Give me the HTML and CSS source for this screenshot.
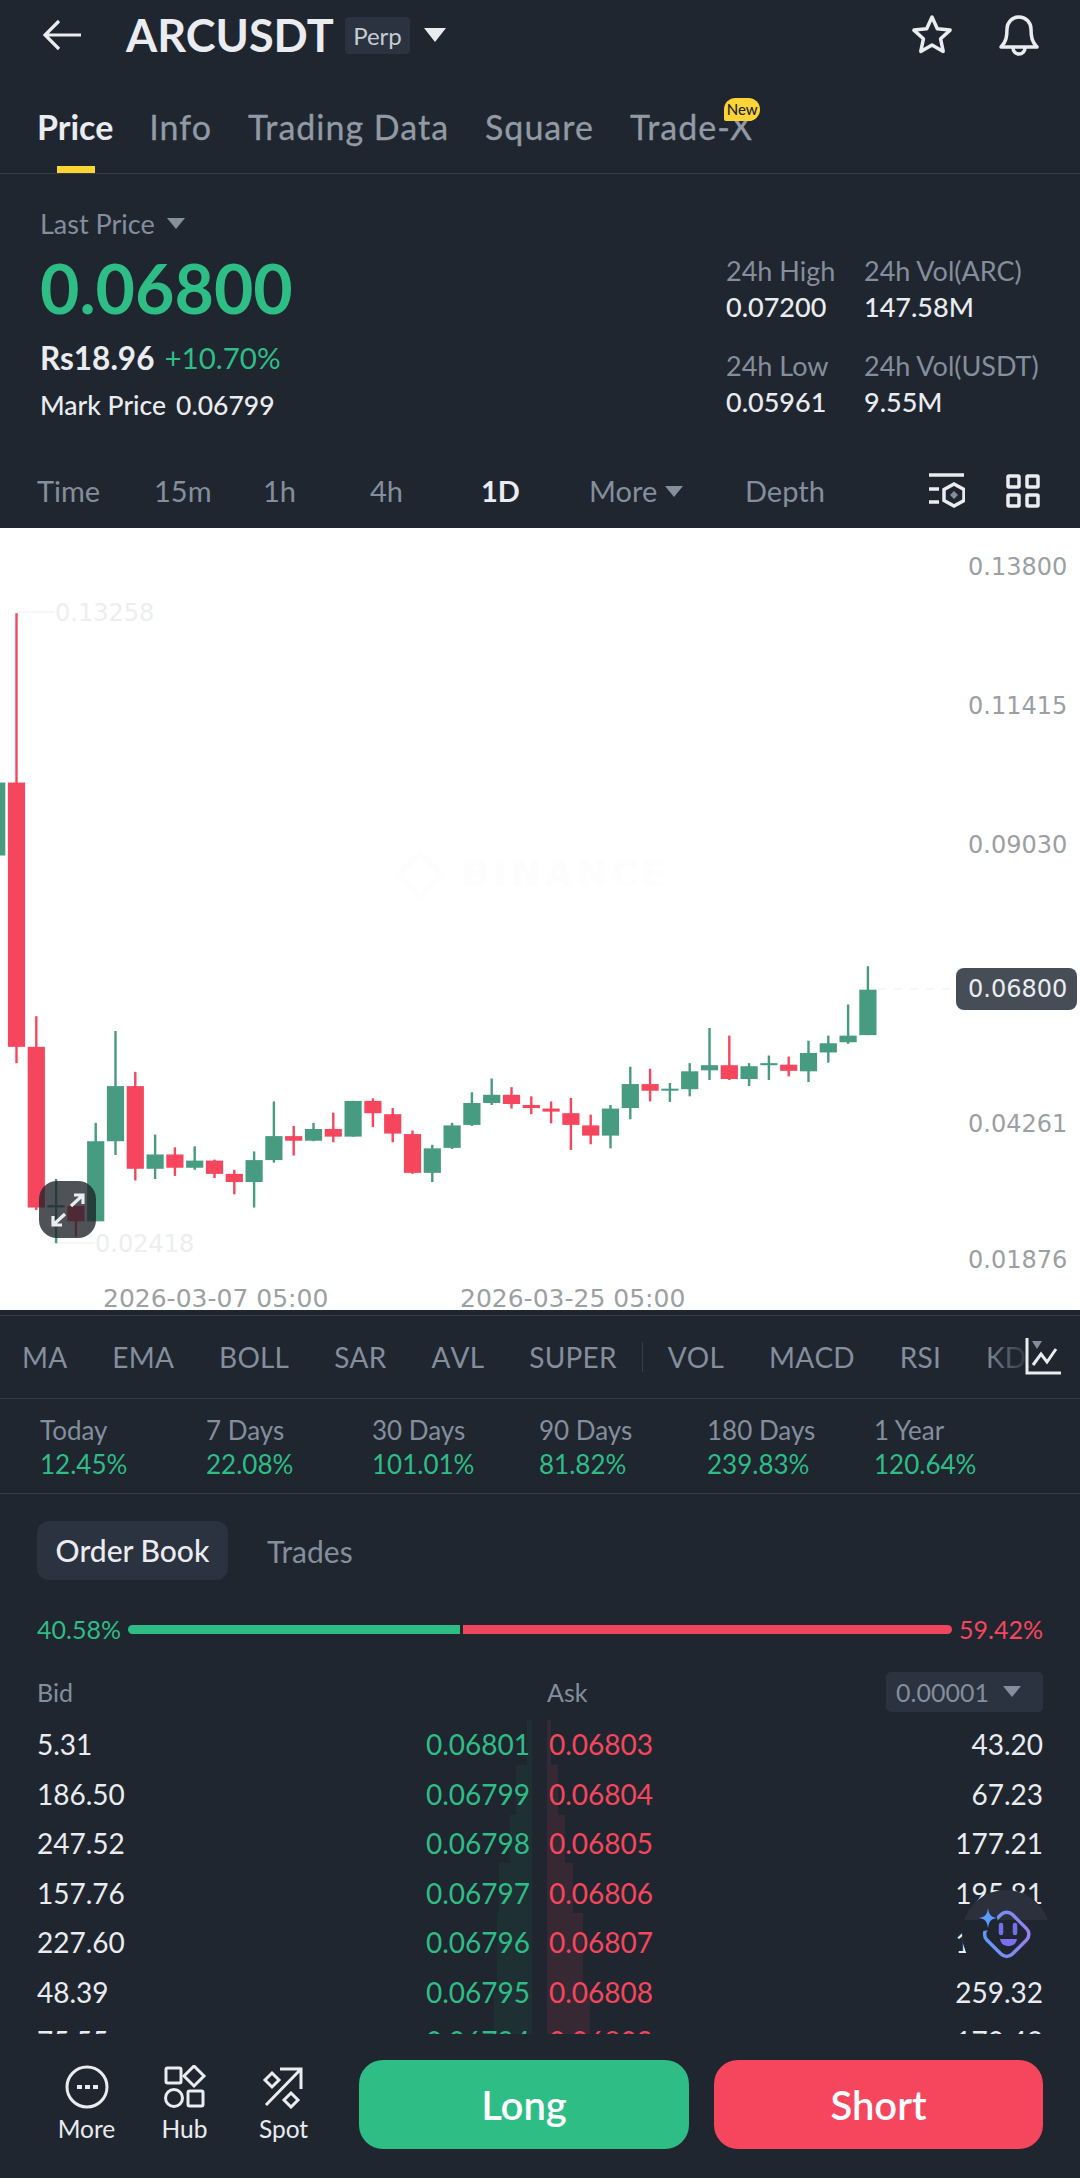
FILE: index.html
```html
<!DOCTYPE html>
<html lang="en">
<head>
    <meta charset="UTF-8">
    <meta name="viewport" content="width=device-width, initial-scale=1.0">
    <title>ARCUSDT Perp</title>
    <link rel="stylesheet" href="styles.css">
</head>
<body>

    <header class="topbar">
        <svg class="back" width="38" height="32" viewBox="0 0 38 32"><path d="M38 16H3M16 2L2 16l14 14" /></svg>
        <span class="symbol">ARCUSDT</span>
        <span class="perp">Perp</span>
        <span class="caret caret-white"></span>
        <span class="topbar-space"></span>
        <svg class="ico star" width="42" height="42" viewBox="0 0 42 42"><path d="M21 3l5.3 11.7 12.8 1.4-9.5 8.7 2.6 12.6L21 31 9.8 37.4l2.6-12.6-9.5-8.7 12.8-1.4z" /></svg>
        <svg class="ico bell" width="42" height="46" viewBox="0 0 42 46"><path d="M3 35c5-5 6-10 6-18a12 12 0 0 1 24 0c0 8 1 13 6 18z" /><path d="M15 36a6 6 0 0 0 12 0" /></svg>
    </header>

    <nav class="tabs">
        <a class="tab active">Price</a>
        <a class="tab">Info</a>
        <a class="tab">Trading Data</a>
        <a class="tab">Square</a>
        <a class="tab">Trade-X<span class="new-badge">New</span></a>
    </nav>

    <section class="ticker">
        <div class="ticker-left">
            <div class="last-label">Last Price<span class="caret caret-small"></span></div>
            <div class="last-price">0.06800</div>
            <div class="fiat"><span class="fiat-value">Rs18.96</span> <span class="up">+10.70%</span></div>
            <div class="mark"><span>Mark Price</span> <span>0.06799</span></div>
        </div>
        <div class="ticker-right">
            <div class="stat"><span>24h High</span><b>0.07200</b></div>
            <div class="stat"><span>24h Vol(ARC)</span><b>147.58M</b></div>
            <div class="stat"><span>24h Low</span><b>0.05961</b></div>
            <div class="stat"><span>24h Vol(USDT)</span><b>9.55M</b></div>
        </div>
    </section>

    <div class="intervals">
        <span>Time</span>
        <span>15m</span>
        <span>1h</span>
        <span>4h</span>
        <span class="on">1D</span>
        <span>More<i class="caret caret-small"></i></span>
        <span>Depth</span>
        <svg class="ico-thin draw-ico" width="36" height="36" viewBox="0 0 36 36"><path d="M0 2h35M0 16h10M0 29h10" /><path d="M25 11l10 5.5v11L25 33l-10-5.500v-11z" /><path class="fill" d="M25 18l4 4-4 4-4-4z" /></svg>
        <svg class="ico-thin grid-ico" width="34" height="34" viewBox="0 0 34 34"><rect x="2" y="2" width="11" height="11" rx="1" /><rect x="21" y="2" width="11" height="11" rx="1" /><rect x="2" y="21" width="11" height="11" rx="1" /><rect x="21" y="21" width="11" height="11" rx="1" /></svg>
    </div>

    <div class="chart">
        <svg id="candles" width="1080" height="782" viewBox="0 0 1080 782">
            <!-- watermark -->
            <path d="M420 325l22 22-22 22-22-22z" fill="none" stroke="#fdfdfd" stroke-width="5" />
            <text x="462" y="358" class="watermark">BINANCE</text>

            <path d="M17 84H55M56 715H95" class="guide" />
            <path d="M878 461H955" class="guide dashed" />
            <text x="55" y="93" class="faint">0.13258</text>
            <text x="95" y="724" class="faint">0.02418</text>

            <text x="968" y="47" class="axis">0.13800</text>
            <text x="968" y="186" class="axis">0.11415</text>
            <text x="968" y="325" class="axis">0.09030</text>
            <text x="968" y="604" class="axis">0.04261</text>
            <text x="968" y="740" class="axis">0.01876</text>
            <text x="103" y="779" class="axis date">2026-03-07 05:00</text>
            <text x="460" y="779" class="axis date">2026-03-25 05:00</text>
        </svg>
        <div class="price-tag">0.06800</div>
        <div class="fullscreen">
            <svg width="36" height="36" viewBox="0 0 36 36"><path d="M3 33L15 22M3 24v9h9M33 3L21 14M24 3h9v9" /></svg>
        </div>
    </div>

    <div class="indicators">
        <span>MA</span>
        <span>EMA</span>
        <span>BOLL</span>
        <span>SAR</span>
        <span>AVL</span>
        <span>SUPER</span>
        <i class="sep"></i>
        <span>VOL</span>
        <span>MACD</span>
        <span>RSI</span>
        <span>KDJ</span>
        <div class="ind-more">
            <svg width="36" height="38" viewBox="0 0 36 38"><path d="M2 0v35h34" /><path d="M8 27l8-11 6 8 9-13" /><path class="fill" d="M7 3h10l-5 8z" /></svg>
        </div>
    </div>

    <div class="returns">
        <div><span>Today</span><b>12.45%</b></div>
        <div><span>7 Days</span><b>22.08%</b></div>
        <div><span>30 Days</span><b>101.01%</b></div>
        <div><span>90 Days</span><b>81.82%</b></div>
        <div><span>180 Days</span><b>239.83%</b></div>
        <div><span>1 Year</span><b>120.64%</b></div>
    </div>

    <div class="book-tabs">
        <span class="pill">Order Book</span>
        <span class="plain">Trades</span>
    </div>

    <div class="ratio">
        <span class="up">40.58%</span>
        <div class="ratio-bar">
            <i class="ratio-bid"></i>
            <i class="ratio-ask"></i>
        </div>
        <span class="down">59.42%</span>
    </div>

    <div class="book-head">
        <span class="head-bid">Bid</span>
        <span class="head-ask">Ask</span>
        <span class="precision">0.00001 <i class="caret caret-small"></i></span>
    </div>

    <div class="book">
        <svg class="depth" width="1080" height="314" viewBox="0 0 1080 314">
            <path fill="#2ebd85" fill-opacity="0.07" d="M532 0V314H494V273H497V193H499V143H510V95H516V45H527V0z" />
            <path fill="#f6465d" fill-opacity="0.11" d="M547 0V314H590V273H583V193H573V143H565V95H558V45H551V0z" />
        </svg>
        <div class="row"><span>5.31</span><span class="up">0.06801</span><span class="down">0.06803</span><span>43.20</span></div>
        <div class="row"><span>186.50</span><span class="up">0.06799</span><span class="down">0.06804</span><span>67.23</span></div>
        <div class="row"><span>247.52</span><span class="up">0.06798</span><span class="down">0.06805</span><span>177.21</span></div>
        <div class="row"><span>157.76</span><span class="up">0.06797</span><span class="down">0.06806</span><span>195.81</span></div>
        <div class="row"><span>227.60</span><span class="up">0.06796</span><span class="down">0.06807</span><span>170.58</span></div>
        <div class="row"><span>48.39</span><span class="up">0.06795</span><span class="down">0.06808</span><span>259.32</span></div>
        <div class="row"><span>75.55</span><span class="up">0.06794</span><span class="down">0.06809</span><span>170.42</span></div>
    </div>

    <footer class="actions">
        <div class="action">
            <svg width="44" height="44" viewBox="0 0 44 44"><circle cx="22" cy="22" r="20" /><path class="fill" d="M12 20h5v4h-5zM20 20h5v4h-5zM28 20h5v4h-5z" /></svg>
            <span>More</span>
        </div>
        <div class="action">
            <svg width="44" height="44" viewBox="0 0 44 44"><rect x="3" y="3" width="15" height="15" rx="1.500" /><path d="M31 1l10 10-10 10-10-10z" /><circle cx="11" cy="33" r="8.500" /><rect x="25" y="26" width="15" height="15" rx="1.500" /></svg>
            <span>Hub</span>
        </div>
        <div class="action">
            <svg width="44" height="44" viewBox="0 0 44 44"><path d="M4 40L38 5M18 4h21v20" /><path d="M10 8l7 7-7 7-7-7zM29 28l7 7-7 7-7-7z" /></svg>
            <span>Spot</span>
        </div>
        <button class="btn btn-long">Long</button>
        <button class="btn btn-short">Short</button>
    </footer>

    <div class="assistant">
        <svg width="88" height="88" viewBox="0 0 88 88">
            <defs>
                <linearGradient id="botStroke" x1="0" y1="1" x2="1" y2="0">
                    <stop offset="0" stop-color="#5b9bf5" />
                    <stop offset="1" stop-color="#9a7ff0" />
                </linearGradient>
            </defs>
            <rect x="26" y="26" width="36" height="36" rx="8" transform="rotate(45 44 45)" fill="none" stroke="url(#botStroke)" stroke-width="3.500" />
            <path d="M16 28h20v12H16z" fill="#1f2630" transform="rotate(-10 26 34)" />
            <path d="M26 18c1 7 3 9 9 10-6 1-8 3-9 10-1-7-3-9-9-10 6-1 8-3 9-10z" fill="#5b9bff" />
            <path d="M39 35v8M53 35v8" stroke="#6f72e8" stroke-width="4.500" stroke-linecap="round" />
            <path d="M38 49h17c-1 5-4 7-8.500 7S39 54 38 49z" fill="#7a6ff0" />
        </svg>
    </div>

    <script src="chart.js"></script>
</body>
</html>
```

FILE: styles.css
```css
* {
    box-sizing: border-box;
}
html, body {
    margin: 0;
    padding: 0;
}
body {
    position: relative;
    width: 1080px;
    height: 2178px;
    overflow: hidden;
    background: #1f2630;
    color: #eaecef;
    font-family: "Lato", "Noto Sans", sans-serif;
}
b {
    font-weight: 500;
}
.up {
    color: #2ebd85;
}
.down {
    color: #f6465d;
}
.fill {
    fill: currentColor;
    stroke: none;
}

/* little triangles */
.caret {
    display: inline-block;
    width: 0;
    height: 0;
    border-style: solid;
    border-color: currentColor transparent transparent transparent;
}
.caret-white {
    border-width: 14px 11px 0 11px;
    color: #eaecef;
    margin-left: 14px;
}
.caret-small {
    border-width: 11px 9px 0 9px;
    color: #848e9c;
    vertical-align: 5px;
    margin-left: 8px;
}
.last-label .caret-small {
    margin-left: 12px;
}

/* top bar */
.topbar {
    display: flex;
    align-items: center;
    height: 70px;
    padding-left: 43px;
}
.back {
    fill: none;
    stroke: #eaecef;
    stroke-width: 3.2;
}
.symbol {
    margin-left: 45px;
    font-size: 45px;
    font-weight: 700;
    line-height: 70px;
    width: 207px;
    white-space: nowrap;
}
.perp {
    margin-left: 12px;
    width: 65px;
    height: 37px;
    line-height: 37px;
    text-align: center;
    font-size: 24px;
    color: #c6ccd4;
    background: #2b3240;
    border-radius: 4px;
}
.topbar-space {
    flex: 1;
}
.ico {
    fill: none;
    stroke: #eaecef;
    stroke-width: 3.5;
    stroke-linejoin: round;
    stroke-linecap: round;
}
.star {
    margin-right: 45px;
}
.bell {
    margin-right: 40px;
}

/* tabs */
.tabs {
    display: flex;
    gap: 36px;
    height: 104px;
    padding: 37px 0 0 37px;
    border-bottom: 1px solid #363d4a;
}
.tab {
    position: relative;
    height: 40px;
    line-height: 40px;
    font-size: 34px;
    letter-spacing: 1px;
    -webkit-text-stroke: 0.3px currentColor;
    color: #929aa5;
    white-space: nowrap;
}
.tab.active {
    color: #eaecef;
    font-weight: 700;
    letter-spacing: 0;
    -webkit-text-stroke: 0;
}
.tab.active::after {
    content: "";
    position: absolute;
    left: 20px;
    top: 59px;
    width: 38px;
    height: 7px;
    background: #fcd535;
}
.new-badge {
    position: absolute;
    right: -7px;
    top: -9px;
    width: 36px;
    height: 23px;
    line-height: 23px;
    text-align: center;
    font-size: 15px;
    font-weight: 500;
    letter-spacing: 0;
    -webkit-text-stroke: 0;
    color: #1e2329;
    background: #fcd535;
    border-radius: 12px 12px 12px 2px;
}

/* price block */
.ticker {
    display: flex;
    justify-content: space-between;
    height: 284px;
    padding-left: 40px;
}
.ticker-left {
    padding-top: 36px;
}
.last-label {
    height: 28px;
    line-height: 28px;
    font-size: 27px;
    color: #848e9c;
}
.last-price {
    margin-top: 18px;
    height: 64px;
    line-height: 64px;
    font-size: 68px;
    font-weight: 700;
    color: #2ebd85;
}
.fiat {
    display: flex;
    gap: 10px;
    margin-top: 20px;
    height: 36px;
    line-height: 36px;
    font-size: 29.500px;
}
.fiat-value {
    font-size: 31.500px;
    font-weight: 700;
}
.mark {
    display: flex;
    gap: 10px;
    margin-top: 12px;
    height: 34px;
    line-height: 34px;
    font-size: 26.500px;
    font-weight: 500;
}
.ticker-right {
    display: grid;
    grid-template-columns: 138px 216px;
    row-gap: 23px;
    align-content: start;
    padding-top: 79px;
}
.stat span, .stat b {
    display: block;
    height: 36px;
    line-height: 36px;
    font-size: 27px;
    white-space: nowrap;
}
.stat span {
    color: #848e9c;
}

/* interval row */
.intervals {
    display: grid;
    grid-template-columns: 117px 109px 107px 111px 108px 156px 184px 77px 34px;
    align-items: center;
    height: 70px;
    padding: 0 0 6px 37px;
    font-size: 29px;
    color: #848e9c;
}
.intervals .on {
    color: #eaecef;
    font-weight: 700;
}
.ico-thin {
    fill: none;
    stroke: #eaecef;
    stroke-width: 3.5;
    margin-top: 2px;
}

/* chart */
.chart {
    position: relative;
    height: 782px;
    background: #fff;
    overflow: hidden;
}
.chart svg {
    display: block;
}
.axis {
    font-family: "DejaVu Sans", sans-serif;
    font-size: 24px;
    fill: #9c9fa3;
}
.axis.date {
    font-size: 25px;
}
.faint {
    font-family: "DejaVu Sans", sans-serif;
    font-size: 24px;
    fill: #eceef0;
}
.watermark {
    font-family: "DejaVu Sans", sans-serif;
    font-size: 36px;
    font-weight: 700;
    letter-spacing: 4px;
    fill: #fdfdfd;
}
.guide {
    fill: none;
    stroke: #eceef0;
    stroke-width: 1;
}
.guide.dashed {
    stroke-dasharray: 8 8;
}
.price-tag {
    position: absolute;
    left: 956px;
    top: 440px;
    width: 121px;
    height: 42px;
    line-height: 42px;
    padding-left: 12px;
    font-family: "DejaVu Sans", sans-serif;
    font-size: 24px;
    color: #eaecef;
    background: #474d57;
    border-radius: 8px;
}
.fullscreen {
    position: absolute;
    left: 39px;
    top: 653px;
    width: 57px;
    height: 57px;
    display: flex;
    align-items: center;
    justify-content: center;
    background: rgba(30, 35, 41, 0.78);
    border-radius: 18px;
}
.fullscreen svg {
    fill: none;
    stroke: #eaecef;
    stroke-width: 3.2;
}

/* indicators */
.indicators {
    position: relative;
    display: flex;
    align-items: center;
    gap: 45px;
    margin-top: 5px;
    height: 84px;
    padding-left: 22px;
    border-top: 1px solid #363d4a;
    border-bottom: 1px solid #363d4a;
    font-size: 28px;
    font-kerning: none;
    letter-spacing: 0.2px;
    color: #848e9c;
    overflow: hidden;
}
.sep {
    width: 1px;
    height: 30px;
    margin: 0 -20px;
    background: #363d4a;
}
.ind-more {
    position: absolute;
    right: 0;
    top: 0;
    bottom: 0;
    width: 96px;
    display: flex;
    align-items: center;
    justify-content: flex-end;
    padding-right: 19px;
    background: linear-gradient(90deg, rgba(31, 38, 48, 0), #1f2630 52%);
}
.ind-more svg {
    fill: none;
    stroke: #eaecef;
    stroke-width: 3;
}

/* returns */
.returns {
    display: grid;
    grid-template-columns: 166px 166px 167px 168px 167px 1fr;
    height: 95px;
    padding: 14px 0 0 40px;
    border-bottom: 1px solid #363d4a;
}
.returns span, .returns b {
    display: block;
    height: 34px;
    line-height: 34px;
    font-size: 26px;
    font-weight: 400;
}
.returns span {
    color: #848e9c;
}
.returns b {
    color: #2ebd85;
}

/* order book */
.book-tabs {
    display: flex;
    align-items: center;
    margin-top: 27px;
    padding-left: 37px;
    height: 59px;
    font-size: 30px;
}
.pill {
    width: 191px;
    height: 59px;
    line-height: 59px;
    text-align: center;
    font-weight: 500;
    background: #2b3240;
    border-radius: 12px;
}
.plain {
    margin-left: 39px;
    color: #848e9c;
}
.ratio {
    display: flex;
    align-items: center;
    justify-content: space-between;
    margin-top: 34px;
    height: 30px;
    padding: 0 37px;
    font-size: 25px;
}
.ratio-bar {
    display: flex;
    gap: 3px;
    width: 824px;
    height: 9px;
}
.ratio-bid {
    width: 332px;
    background: #2ebd85;
    border-radius: 5px 0 0 5px;
}
.ratio-ask {
    flex: 1;
    background: #f0465d;
    border-radius: 0 5px 5px 0;
}
.book-head {
    display: flex;
    align-items: center;
    margin-top: 28px;
    height: 40px;
    padding: 0 37px;
    font-size: 25px;
    color: #848e9c;
}
.head-bid {
    width: 510px;
}
.head-ask {
    flex: 1;
}
.precision {
    width: 157px;
    height: 40px;
    line-height: 40px;
    padding-left: 10px;
    background: #2b3240;
    border-radius: 5px;
    white-space: nowrap;
}
.book {
    position: relative;
    margin-top: 8px;
    height: 314px;
    overflow: hidden;
}
.depth {
    position: absolute;
    left: 0;
    top: 0;
}
.row {
    position: relative;
    display: grid;
    grid-template-columns: 243px 250px 250px 1fr;
    height: 49.500px;
    line-height: 49.500px;
    padding: 0 37px;
    font-size: 28px;
}
.row span:nth-child(2) {
    text-align: right;
}
.row span:nth-child(3) {
    padding-left: 19px;
}
.row span:nth-child(4) {
    text-align: right;
}

/* bottom bar */
.actions {
    display: flex;
    height: 144px;
    padding: 26px 37px 0 0;
}
.action {
    width: 99px;
    flex: none;
    text-align: center;
    font-size: 24.500px;
    line-height: 28px;
}
.action:first-child {
    margin-left: 37px;
}
.action:nth-child(2) {
    margin-left: -1px;
}
.action svg {
    display: block;
    margin: 5px auto 6px;
    fill: none;
    stroke: #eaecef;
    stroke-width: 3;
}
.btn {
    height: 89px;
    border: none;
    border-radius: 24px;
    font-family: inherit;
    font-size: 40px;
    font-weight: 600;
    color: #fff;
}
.btn-long {
    width: 330px;
    margin-left: auto;
    background: #2ebd85;
}
.btn-short {
    width: 329px;
    margin-left: 25px;
    background: #f6465d;
}

/* floating assistant */
.assistant {
    position: absolute;
    left: 962px;
    top: 1890px;
    width: 88px;
    height: 88px;
    border-radius: 44px;
    background: linear-gradient(#2c303c 0, #2c303c 34%, #1f2630 34%);
}
.assistant svg {
    display: block;
}
```

FILE: chart.js
```js
// candle values are read from the chart: [bodyTop, bodyBottom, wickTop, wickBottom, up?]
const candles = [
    [495, 638, 495, 638, 1],
    [495, 1013, 163, 1045, 0],
    [1013, 1328, 953, 1333, 0],
    [1323, 1328, 1272, 1398, 1],
    [1325, 1355, 1325, 1385, 0],
    [1198, 1355, 1162, 1355, 1],
    [1090, 1198, 982, 1225, 1],
    [1090, 1252, 1062, 1275, 0],
    [1224, 1252, 1185, 1272, 1],
    [1224, 1250, 1210, 1266, 0],
    [1236, 1250, 1208, 1254, 1],
    [1236, 1262, 1234, 1270, 0],
    [1262, 1278, 1254, 1302, 0],
    [1235, 1278, 1218, 1328, 1],
    [1188, 1235, 1120, 1240, 1],
    [1188, 1197, 1168, 1226, 0],
    [1174, 1197, 1162, 1198, 1],
    [1174, 1189, 1142, 1200, 0],
    [1119, 1189, 1119, 1189, 1],
    [1119, 1143, 1114, 1170, 0],
    [1145, 1183, 1133, 1200, 0],
    [1184, 1260, 1177, 1262, 0],
    [1212, 1260, 1205, 1278, 1],
    [1167, 1211, 1162, 1213, 1],
    [1123, 1166, 1102, 1168, 1],
    [1107, 1123, 1075, 1127, 1],
    [1107, 1125, 1092, 1134, 0],
    [1127, 1133, 1110, 1145, 0],
    [1134, 1140, 1120, 1163, 0],
    [1143, 1166, 1113, 1215, 0],
    [1167, 1187, 1146, 1204, 0],
    [1134, 1187, 1127, 1212, 1],
    [1086, 1133, 1052, 1155, 1],
    [1086, 1099, 1056, 1120, 0],
    [1095, 1098, 1084, 1121, 1],
    [1061, 1096, 1045, 1110, 1],
    [1049, 1059, 976, 1078, 1],
    [1049, 1076, 991, 1078, 0],
    [1051, 1076, 1045, 1090, 1],
    [1045, 1049, 1030, 1078, 1],
    [1048, 1060, 1032, 1071, 0],
    [1025, 1061, 1001, 1082, 1],
    [1006, 1024, 991, 1044, 1],
    [991, 1004, 930, 1007, 1],
    [901, 990, 855, 990, 1]
];

const svg = document.getElementById("candles");
const ns = "http://www.w3.org/2000/svg";

function toY(v) {
    return 2 + v / 1.96;
}

function addRect(x, y, w, h, color) {
    const r = document.createElementNS(ns, "rect");
    r.setAttribute("x", x);
    r.setAttribute("y", y);
    r.setAttribute("width", w);
    r.setAttribute("height", Math.max(h, 2));
    r.setAttribute("fill", color);
    svg.appendChild(r);
}

candles.forEach((c, i) => {
    const x = -3.3 + i * 19.8;
    const color = c[4] ? "#469b81" : "#f6465d";
    addRect(x - 1.2, toY(c[2]), 2.4, toY(c[3]) - toY(c[2]), color);
    addRect(x - 8.6, toY(c[0]), 17.2, toY(c[1]) - toY(c[0]), color);
});
```
